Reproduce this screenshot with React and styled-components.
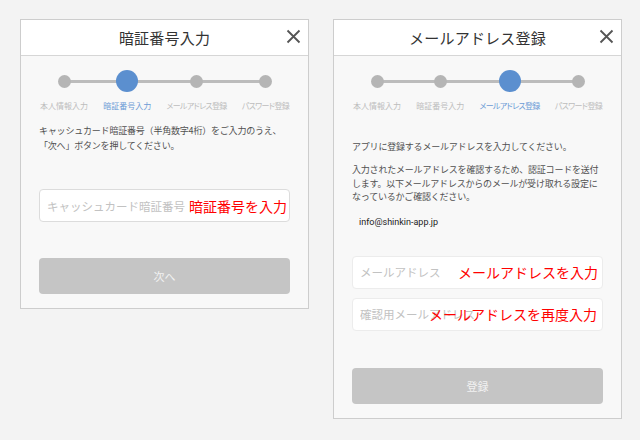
import React from "react";
import styled, { createGlobalStyle } from "styled-components";

const Global = createGlobalStyle`
  html, body { margin: 0; padding: 0; background: #f3f3f3; }
  body { font-family: "Noto Sans CJK JP", "Noto Sans", sans-serif; }
  * { box-sizing: border-box; }
`;

const Page = styled.div`
  display: flex;
  align-items: flex-start;
  gap: 24px;
  padding: 19px 0 0 20px;
  width: 640px;
  height: 440px;
`;

const Panel = styled.section`
  width: 289px;
  border: 1px solid #cdcdcd;
  background: #f8f8f8;
`;

const Header = styled.header`
  height: 36px;
  display: grid;
  grid-template-columns: 1fr auto 1fr;
  align-items: center;
  background: #fff;
  border-bottom: 1px solid #d6d6d6;
`;

const Title = styled.h1`
  grid-column: 2;
  margin: 0;
  font-size: 15px;
  font-weight: 400;
  color: #333;
  line-height: 35px;
  letter-spacing: 0.2px;
`;

const Close = styled.button`
  grid-column: 3;
  justify-self: end;
  margin-right: 7px;
  margin-top: -3px;
  width: 16px;
  height: 16px;
  padding: 0;
  border: none;
  background: none;
  display: flex;
  align-items: center;
  justify-content: center;
`;

const Body = styled.div`
  padding: 0 18px 14px;
  display: flex;
  flex-direction: column;
`;

const Stepper = styled.ol`
  position: relative;
  list-style: none;
  margin: 14px 0 0;
  padding: 0 1px;
  display: flex;
  justify-content: space-between;
`;

const Track = styled.span`
  position: absolute;
  left: 26px;
  right: 26px;
  top: 10px;
  height: 3px;
  background: #bcbcbc;
`;

const Step = styled.li`
  position: relative;
  display: flex;
  flex-direction: column;
  align-items: center;
`;

const DotSlot = styled.span`
  height: 22px;
  display: flex;
  align-items: center;
`;

const Dot = styled.span`
  width: ${(p) => (p.$active ? 22 : 13)}px;
  height: ${(p) => (p.$active ? 22 : 13)}px;
  border-radius: 50%;
  background: ${(p) => (p.$active ? "#5b8fcf" : "#b5b5b5")};
`;

const StepLabel = styled.span`
  margin-top: 9px;
  font-size: 8px;
  line-height: 10px;
  white-space: nowrap;
  font-feature-settings: "palt";
  letter-spacing: ${(p) => (p.$kana ? "-0.7px" : "0")};
  color: ${(p) => (p.$active ? "#6c9bd6" : "#bdbdbd")};
`;

const Text = styled.p`
  margin: ${(p) => p.$mt}px 0 0;
  font-size: 9px;
  line-height: ${(p) => p.$lh}px;
  color: #505050;
  letter-spacing: -0.2px;
`;

const Email = styled.p`
  margin: 12px 0 0 7px;
  font-family: "Roboto", "Noto Sans CJK JP", sans-serif;
  font-size: 9px;
  line-height: 13px;
  color: #222;
`;

const Field = styled.div`
  position: relative;
  margin-top: ${(p) => p.$mt}px;
  height: 33px;
  background: #fff;
  border: 1px solid ${(p) => p.$line};
  border-radius: 4px;
  display: flex;
  align-items: center;
`;

const Input = styled.input`
  border: none;
  outline: none;
  background: transparent;
  width: 100%;
  padding: 0 7px;
  font-family: "Noto Sans CJK JP", sans-serif;
  font-size: 11.5px;
  color: #333;
  &::placeholder { color: #c2c2c2; }
`;

const Note = styled.span`
  position: absolute;
  left: ${(p) => p.$left}px;
  top: 50%;
  transform: translateY(-52%);
  font-size: 14px;
  line-height: 16px;
  color: #ff0000;
  white-space: nowrap;
  pointer-events: none;
`;

const Submit = styled.button`
  margin-top: ${(p) => p.$mt}px;
  height: 36px;
  border: none;
  border-radius: 4px;
  background: #c5c5c5;
  color: #f2f2f2;
  font-family: "Noto Sans CJK JP", sans-serif;
  font-size: 11px;
`;

const steps = [
  { label: "本人情報入力" },
  { label: "暗証番号入力" },
  { label: "メールアドレス登録", kana: true },
  { label: "パスワード登録", kana: true },
];

const CloseIcon = () => (
  <svg width="15" height="15" viewBox="0 0 15 15">
    <path d="M1.5 1.5L13.5 13.5M13.5 1.5L1.5 13.5" stroke="#555" strokeWidth="1.8" fill="none" />
  </svg>
);

function Steps({ active }) {
  return (
    <Stepper>
      <Track />
      {steps.map((s, i) => (
        <Step key={s.label}>
          <DotSlot>
            <Dot $active={i === active} />
          </DotSlot>
          <StepLabel $active={i === active} $kana={s.kana}>
            {s.label}
          </StepLabel>
        </Step>
      ))}
    </Stepper>
  );
}

function Dialog({ title, children }) {
  return (
    <Panel>
      <Header>
        <Title>{title}</Title>
        <Close aria-label="閉じる">
          <CloseIcon />
        </Close>
      </Header>
      <Body>{children}</Body>
    </Panel>
  );
}

export default function App() {
  return (
    <>
      <Global />
      <Page>
        <Dialog title="暗証番号入力">
          <Steps active={1} />
          <Text $mt={12} $lh={15}>
            キャッシュカード暗証番号（半角数字4桁）をご入力のうえ、
            <br />
            「次へ」ボタンを押してください。
          </Text>
          <Field $mt={36} $line="#dcdcdc">
            <Input placeholder="キャッシュカード暗証番号" />
            <Note $left={149}>暗証番号を入力</Note>
          </Field>
          <Submit $mt={36}>次へ</Submit>
        </Dialog>
        <Dialog title="メールアドレス登録">
          <Steps active={2} />
          <Text $mt={29} $lh={13}>アプリに登録するメールアドレスを入力してください。</Text>
          <Text $mt={10} $lh={13.5}>
            入力されたメールアドレスを確認するため、認証コードを送付します。以下メールアドレスからのメールが受け取れる設定になっているかご確認ください。
          </Text>
          <Email>info@shinkin-app.jp</Email>
          <Field $mt={27} $line="#ececec">
            <Input placeholder="メールアドレス" />
            <Note $left={105}>メールアドレスを入力</Note>
          </Field>
          <Field $mt={9} $line="#ececec">
            <Input placeholder="確認用メールアドレス" />
            <Note $left={76}>メールアドレスを再度入力</Note>
          </Field>
          <Submit $mt={37}>登録</Submit>
        </Dialog>
      </Page>
    </>
  );
}
